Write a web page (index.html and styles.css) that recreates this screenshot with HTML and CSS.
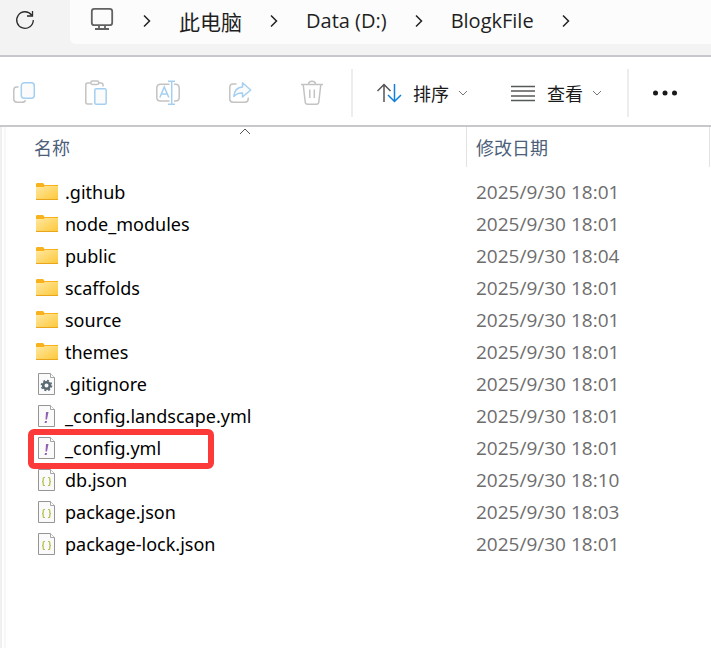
FILE: index.html
```
<!DOCTYPE html>
<html lang="zh-CN">
<head>
<meta charset="utf-8">
<meta name="viewport" content="width=device-width, initial-scale=1">
<title>BlogkFile</title>
<link rel="stylesheet" href="styles.css">
</head>
<body>
<svg class="defs" aria-hidden="true">
  <defs>
    <linearGradient id="folder-fill" x1="0" y1="0" x2="1" y2="1">
      <stop offset="0" stop-color="#ffe8a0"/><stop offset="1" stop-color="#fdc83a"/>
    </linearGradient>
    <symbol id="folder" viewBox="0 0 24 24">
      <path d="M1 4.500q0-1.500 1-1.500h6l1.500 2H23v4H1z" fill="#f8b21b"/>
      <path d="M1 7h7.500l1.500-1H23v13.500H1z" fill="url(#folder-fill)"/>
      <path d="M1 19.500h22" stroke="#eaa51c"/>
    </symbol>
    <symbol id="page" viewBox="0 0 24 24">
      <path d="M3.500 1.500h12l4 4v17h-16z" fill="#fafafa" stroke="#959595"/>
      <path d="M15.500 1.500v4h4" fill="#fff" stroke="#a5a5a5"/>
    </symbol>
    <symbol id="gear" viewBox="0 0 24 24">
      <use href="#page"/>
      <circle cx="11.500" cy="13.500" r="3.300" fill="none" stroke="#5b6b73" stroke-width="2.600"/>
      <circle cx="11.500" cy="13.500" r="5" fill="none" stroke="#5b6b73" stroke-width="1.600" stroke-dasharray="1.960 1.960"/>
    </symbol>
    <symbol id="yml" viewBox="0 0 24 24">
      <use href="#page"/>
      <path d="M11 8h2.500l-1.500 7.500h-1.500zM10 17h2l-.4 2h-2z" fill="#9160b5"/>
    </symbol>
    <symbol id="json" viewBox="0 0 24 24">
      <use href="#page"/>
      <path d="M10 9.500H9q-.8 0-.8 1v2q0 1-1.200 1 1.200 0 1.200 1v2q0 1 .8 1h1M13 9.500h1q.8 0 .8 1v2q0 1 1.200 1-1.200 0-1.200 1v2q0 1-.8 1h-1" fill="none" stroke="#b4bd45" stroke-width="1.200"/>
    </symbol>
    <symbol id="chevron" viewBox="0 0 12 16">
      <path d="M3 2.500l5.500 5.500L3 13.500" fill="none" stroke="#222" stroke-width="1.500"/>
    </symbol>
    <symbol id="caret" viewBox="0 0 10 6">
      <path d="M1 1l4 4 4-4" fill="none" stroke="#777"/>
    </symbol>
  </defs>
</svg>

<header class="location">
  <button class="icon-button refresh" aria-label="刷新">
    <svg width="20" height="20" viewBox="0 0 20 20" fill="none" stroke="#2b2b2b" stroke-width="1.300"><path d="M18.300 10A8.300 8.300 0 1 1 16.600 5M17.500 1v5h-5.500"/></svg>
  </button>
  <nav class="address" aria-label="路径">
    <svg class="monitor" width="24" height="24" viewBox="0 0 24 24" fill="none" stroke="#626262" stroke-width="1.800"><rect x="1.800" y="1.800" width="20.400" height="16.400" rx="2.500"/><path d="M9 18v4M15 18v4M5 22h14"/></svg>
    <svg class="chevron" aria-hidden="true"><use href="#chevron"/></svg>
    <a class="crumb crumb-cjk" href="#">此电脑</a>
    <svg class="chevron" aria-hidden="true"><use href="#chevron"/></svg>
    <a class="crumb" href="#">Data (D:)</a>
    <svg class="chevron" aria-hidden="true"><use href="#chevron"/></svg>
    <a class="crumb" href="#">BlogkFile</a>
    <svg class="chevron" aria-hidden="true"><use href="#chevron"/></svg>
  </nav>
</header>

<div class="toolbar" role="toolbar" aria-label="命令">
  <div class="commands">
    <button class="icon-button" aria-label="复制">
      <svg width="24" height="24" viewBox="0 0 24 24" fill="none" stroke="#c3c3c3" stroke-width="1.500"><path d="M6.500 6H4.500Q1.800 6 1.800 9v9q0 3.200 3.200 3.200h5q3 0 3.500-2"/><rect x="9.300" y="1.800" width="13" height="15.400" rx="3" fill="#fbfbfb" stroke="#a5cff0"/></svg>
    </button>
    <button class="icon-button" aria-label="粘贴">
      <svg width="24" height="26" viewBox="0 0 24 26" fill="none" stroke="#c3c3c3" stroke-width="1.500"><path d="M8.500 24H3.500Q1.800 24 1.800 22V5q0-2 2-2h3M15 3h2q2 0 2 2v1.500"/><rect x="6.800" y="1" width="8" height="3.500" rx="1.700"/><rect x="10.800" y="8.800" width="11.400" height="15.400" rx="1.500" fill="#fbfbfb" stroke="#a5cff0"/></svg>
    </button>
    <button class="icon-button" aria-label="重命名">
      <svg width="26" height="26" viewBox="0 0 26 26" fill="none" stroke="#c3c3c3" stroke-width="1.500"><path d="M14.500 21H5.500Q1.800 21 1.800 17.500V8q0-3.800 3.700-3.800h9M19 4.200h1.500q3.700 0 3.700 3.800v9.500q0 3.500-3.700 3.500H19"/><path d="M4.800 17.500L9.300 7l4.500 10.500M6.300 14h6M13 1.200h7M13 24.300h7M16.700 1.200v23" stroke="#a5cff0"/></svg>
    </button>
    <button class="icon-button" aria-label="共享">
      <svg width="24" height="24" viewBox="0 0 24 24" fill="none" stroke="#c3c3c3" stroke-width="1.500"><path d="M8.500 3H5Q1.800 3 1.800 6.200V18q0 3.200 3.200 3.200h12q3.200 0 3.200-3.200v-1.500"/><path d="M14.500 1.800L22.700 9l-8.200 7v-4q-5-.3-8.700 3.500Q6.500 6.500 14.500 6z" fill="#fbfbfb" stroke="#a5cff0" stroke-linejoin="round"/></svg>
    </button>
    <button class="icon-button" aria-label="删除">
      <svg width="24" height="26" viewBox="0 0 24 26" fill="none" stroke="#c3c3c3" stroke-width="1.500"><path d="M1 4.500h22M8.500 4.500q0-3.300 3.500-3.300t3.500 3.300M3.200 4.500l2 17.500q.2 2.200 2.500 2.200h8.600q2.300 0 2.500-2.200l2-17.500M9.800 9.500V18M14.300 9.500V18"/></svg>
    </button>
  </div>
  <div class="menus">
    <button class="menu-button">
      <svg width="26" height="20" viewBox="0 0 26 20" fill="none" stroke-width="1.500"><path d="M8 19V1.500M1.500 8L8 1.500 14.500 8" stroke="#555"/><path d="M18.500 1v17.500M12 12l6.500 6.500L25 12" stroke="#0f7fdc"/></svg>
      <span>排序</span>
      <svg class="caret" aria-hidden="true"><use href="#caret"/></svg>
    </button>
    <button class="menu-button">
      <svg width="24" height="17" viewBox="0 0 24 17" stroke="#555a57" stroke-width="1.300"><path d="M0 1.500h24M0 6h24M0 11h24M0 15.500h24"/></svg>
      <span>查看</span>
      <svg class="caret" aria-hidden="true"><use href="#caret"/></svg>
    </button>
  </div>
  <button class="icon-button more" aria-label="更多">
    <svg width="26" height="6" viewBox="0 0 26 6" fill="#1a1a1a"><circle cx="3.500" cy="3" r="2.500"/><circle cx="13" cy="3" r="2.500"/><circle cx="22.500" cy="3" r="2.500"/></svg>
  </button>
</div>

<main class="files">
  <div class="listing">
  <table>
    <colgroup><col class="col-name"><col class="col-date"><col></colgroup>
    <thead>
      <tr>
        <th scope="col" aria-sort="ascending">名称<svg class="sort-mark" viewBox="0 0 12 7" aria-hidden="true"><path d="M1 6l5-5 5 5" fill="none" stroke="#555"/></svg></th>
        <th scope="col">修改日期</th>
        <td></td>
      </tr>
    </thead>
    <tbody>
      <tr><td><div class="name"><svg><use href="#folder"/></svg>.github</div></td><td>2025/9/30 18:01</td></tr>
      <tr><td><div class="name"><svg><use href="#folder"/></svg>node_modules</div></td><td>2025/9/30 18:01</td></tr>
      <tr><td><div class="name"><svg><use href="#folder"/></svg>public</div></td><td>2025/9/30 18:04</td></tr>
      <tr><td><div class="name"><svg><use href="#folder"/></svg>scaffolds</div></td><td>2025/9/30 18:01</td></tr>
      <tr><td><div class="name"><svg><use href="#folder"/></svg>source</div></td><td>2025/9/30 18:01</td></tr>
      <tr><td><div class="name"><svg><use href="#folder"/></svg>themes</div></td><td>2025/9/30 18:01</td></tr>
      <tr><td><div class="name"><svg><use href="#gear"/></svg>.gitignore</div></td><td>2025/9/30 18:01</td></tr>
      <tr><td><div class="name"><svg><use href="#yml"/></svg>_config.landscape.yml</div></td><td>2025/9/30 18:01</td></tr>
      <tr><td><div class="name marked"><svg><use href="#yml"/></svg>_config.yml</div></td><td>2025/9/30 18:01</td></tr>
      <tr><td><div class="name"><svg><use href="#json"/></svg>db.json</div></td><td>2025/9/30 18:10</td></tr>
      <tr><td><div class="name"><svg><use href="#json"/></svg>package.json</div></td><td>2025/9/30 18:03</td></tr>
      <tr><td><div class="name"><svg><use href="#json"/></svg>package-lock.json</div></td><td>2025/9/30 18:01</td></tr>
    </tbody>
  </table>
  </div>
</main>
</body>
</html>
```
FILE: styles.css
```
*,
*::before,
*::after {
  box-sizing: border-box;
}

body {
  margin: 0;
  min-height: 100vh;
  display: flex;
  flex-direction: column;
  background: #fff;
  color: #1a1a1a;
  font-family: "Open Sans", "Noto Sans CJK SC", sans-serif;
  font-size: 18px;
}

svg {
  display: block;
  flex: none;
}

.defs {
  position: absolute;
  width: 0;
  height: 0;
}

button {
  display: flex;
  align-items: center;
  padding: 0;
  border: 0;
  background: none;
  color: inherit;
  font: inherit;
}

.location {
  display: flex;
  align-items: flex-start;
  padding-bottom: 11px;
  border-bottom: 2px solid #c8c8cc;
  background: #f3f3f4;
}

.refresh {
  width: 70px;
  height: 40px;
  padding-left: 15px;
}

.address {
  flex: 1;
  display: flex;
  align-items: center;
  height: 44px;
  padding: 0 20px 2px;
  border-bottom-left-radius: 6px;
  background: #fcfcfc;
}

.monitor {
  margin: 0 27px 4px 0;
}

.chevron {
  width: 12px;
  height: 16px;
}

.crumb {
  margin: 0 26px;
  color: #1f1f1f;
  font-size: 20px;
  line-height: 24px;
  text-decoration: none;
  white-space: nowrap;
}

.crumb-cjk {
  font-family: "Noto Sans CJK SC", sans-serif;
  font-size: 21px;
}

.toolbar {
  display: flex;
  align-items: center;
  height: 70px;
  padding-top: 4px;
  border-bottom: 2px solid #c8c8cc;
}

.commands,
.menus {
  display: flex;
  align-items: center;
  height: 48px;
}

.commands {
  gap: 48px;
  padding: 0 27px 0 12px;
  border-right: 2px solid #ededed;
}

.commands .icon-button {
  width: 24px;
  justify-content: center;
}

.menus {
  gap: 43px;
  padding: 0 25px 0 23px;
  border-right: 2px solid #ededed;
}

.menu-button span {
  margin: 0 9px 0 11px;
}

.menu-button:last-child span {
  margin-left: 12px;
}

.caret {
  width: 10px;
  height: 6px;
}

.more {
  margin-left: 23px;
}

.files {
  flex: 1;
  display: flex;
  border-left: 2px solid #f0f0f0;
  padding-left: 2px;
}

.listing {
  flex: 1;
  border-left: 2px solid #f7f7f7;
}

table {
  width: 100%;
  border-spacing: 0;
  table-layout: fixed;
}

.col-name {
  width: 461px;
}

.col-date {
  width: 243px;
}

th,
td {
  padding: 0;
  text-align: left;
}

th {
  position: relative;
  height: 40px;
  padding-left: 9px;
  border-right: 1px solid #e2e2e2;
  color: #4c607a;
  font-weight: 400;
}

th:first-child {
  padding-left: 28px;
}

.sort-mark {
  position: absolute;
  top: 1px;
  left: 233px;
  width: 12px;
  height: 7px;
}

tbody::before {
  content: "";
  display: block;
  height: 9px;
}

tbody td {
  height: 32px;
  padding-left: 9px;
  color: #6d6d6d;
  font-size: 19px;
  line-height: 32px;
}

tbody td:first-child {
  padding-left: 29px;
  color: #000;
  font-family: "Noto Sans", "Noto Sans CJK SC", sans-serif;
  font-size: 18px;
}

.name {
  position: relative;
  display: flex;
  align-items: center;
  gap: 6px;
  height: 32px;
}

.name svg {
  width: 24px;
  height: 24px;
}

.marked::after {
  content: "";
  position: absolute;
  top: -3px;
  left: -7px;
  width: 186px;
  height: 40px;
  border: 6px solid #fd3a3a;
  border-radius: 6px;
  z-index: 1;
}
```
